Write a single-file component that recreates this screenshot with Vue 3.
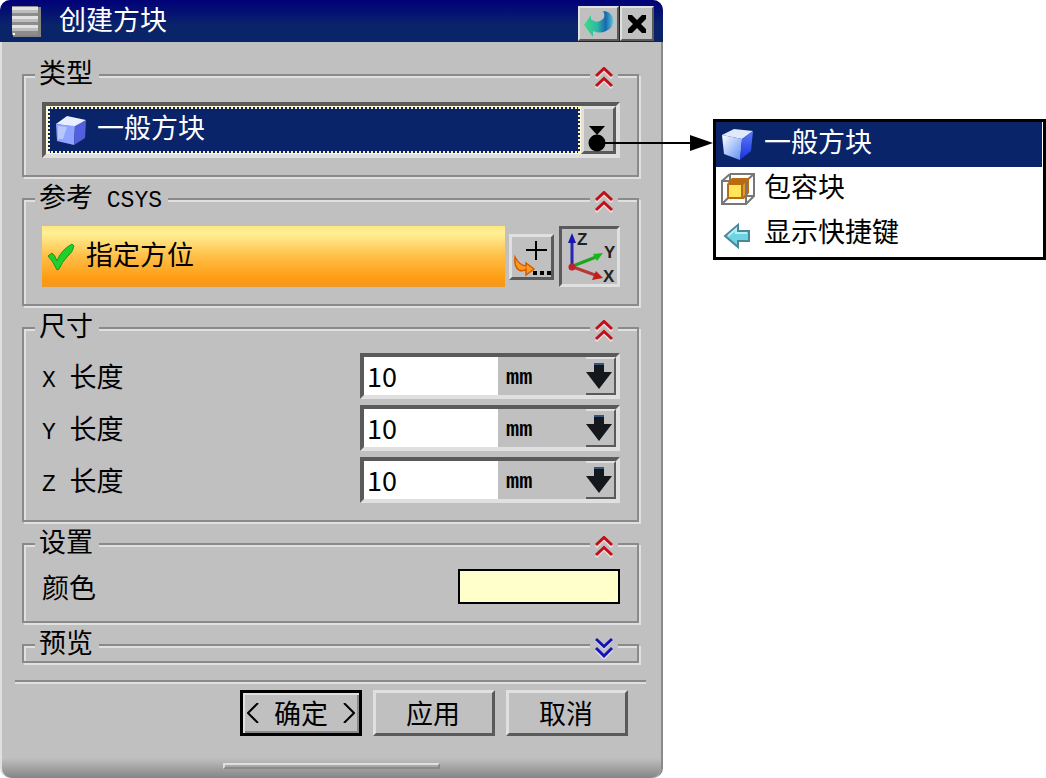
<script setup>
import { ref } from 'vue'

const kinds = ['一般方块', '包容块', '显示快捷键']
const kind = ref('一般方块')
const color = ref('#ffffcc')
const sizes = ref([
  { axis: 'X', value: '10' },
  { axis: 'Y', value: '10' },
  { axis: 'Z', value: '10' },
])
</script>

<template>
  <main class="stage">
    <section class="dialog" aria-labelledby="dialog-title">
      <header class="titlebar">
        <svg class="grip-icon" viewBox="0 0 30 32" aria-hidden="true">
          <rect x="1" y="1" width="28" height="30" fill="#85857f" />
          <rect x="0" y="0" width="26" height="29" fill="#8d8d8d" />
          <g fill="#e2e2e2">
            <rect x="0" y="1" width="26" height="6" />
            <rect x="0" y="10" width="26" height="6" />
            <rect x="0" y="19" width="26" height="6" />
          </g>
          <g fill="#bdbdbd">
            <rect x="0" y="4" width="26" height="3" />
            <rect x="0" y="13" width="26" height="3" />
            <rect x="0" y="22" width="26" height="3" />
          </g>
          <rect x="1" y="27" width="2" height="2" fill="#fff" />
        </svg>
        <h1 id="dialog-title">创建方块</h1>
        <button class="title-button reset" type="button" aria-label="重置">
          <svg width="34" height="30" viewBox="0 0 34 30" aria-hidden="true">
            <defs>
              <linearGradient id="reset-fill" x1="0" x2="1">
                <stop offset="0" stop-color="#3fdc86" />
                <stop offset=".45" stop-color="#2db8a6" />
                <stop offset=".75" stop-color="#1769ad" />
                <stop offset="1" stop-color="#5cc4dc" />
              </linearGradient>
            </defs>
            <path d="M2 16L9 6V10Q13 14 18 12Q25 9 21 2Q29 2 31 10Q32 19 24 22Q18 25 11 22V28Z" fill="url(#reset-fill)" />
          </svg>
        </button>
        <button class="title-button" type="button" aria-label="关闭">
          <svg width="22" height="22" viewBox="0 0 22 22" aria-hidden="true">
            <path d="M2 2H6L11 7L16 2H20V6L15 11L20 16V20H16L11 15L6 20H2V16L7 11L2 6Z" />
          </svg>
        </button>
      </header>

      <form class="groups" @submit.prevent>
        <section class="group">
          <div class="group-head">
            <h2><label for="kind">类型</label></h2>
            <button class="toggle" type="button" aria-label="折叠类型">
              <svg width="18" height="22" viewBox="0 0 18 22"><path class="halo" d="M1 11L9 3L17 11M1 21L9 13L17 21" /><path d="M1 9L9 1.500L17 9M1 19L9 11.500L17 19" /></svg>
            </button>
          </div>
          <div class="dropdown">
            <select id="kind" v-model="kind">
              <option v-for="k in kinds" :key="k">{{ k }}</option>
            </select>
            <svg class="dropdown-icon" width="32" height="32" viewBox="0 0 32 32" aria-hidden="true">
              <path d="M1 9L12 1L31 5L21 12Z" fill="#e8efff" />
              <path d="M1 9L20 11L19 30L2 26Z" fill="#8fa4ff" />
              <path d="M3 11L12 12L8 24L3 24Z" fill="#b9c7ff" />
              <path d="M20 11L31 5L30 23L19 30Z" fill="#5360dd" />
            </svg>
            <span class="dropdown-arrow" aria-hidden="true"></span>
            <svg class="connector" width="125" height="20" viewBox="0 0 125 20" aria-hidden="true">
              <circle cx="9" cy="10" r="8.500" />
              <rect x="9" y="9" width="95" height="2" />
              <path d="M102 2L125 10L102 18Z" />
            </svg>
          </div>
        </section>

        <section class="group">
          <div class="group-head">
            <h2>参考<span class="latin"> CSYS</span></h2>
            <button class="toggle" type="button" aria-label="折叠参考">
              <svg width="18" height="22" viewBox="0 0 18 22"><path class="halo" d="M1 11L9 3L17 11M1 21L9 13L17 21" /><path d="M1 9L9 1.500L17 9M1 19L9 11.500L17 19" /></svg>
            </button>
          </div>
          <div class="orient">
            <button class="specify" type="button">
              <svg width="28" height="28" viewBox="0 0 28 28" aria-hidden="true">
                <path d="M1 13L5 10Q8 12 10 18Q14 7 25 1L27 3Q26 9 20 14Q15 19 12 26L10 27Q6 18 1 13Z" fill="#1fd02d" stroke="#139a1e" stroke-width="1" />
              </svg>
              <span>指定方位</span>
            </button>
            <button class="point" type="button" aria-label="点对话框">
              <svg width="40" height="40" viewBox="0 0 40 40" aria-hidden="true">
                <path d="M14 13H35M24 4V23" stroke="#000" stroke-width="2" />
                <path d="M3 20Q2 30 7 33Q11 35 14 32V38L22 32L14 26V29Q8 29 3 20Z" fill="#ff9a1c" stroke="#d65a00" stroke-width="1.500" />
                <path d="M21 34H25V38H21ZM28 34H32V38H28ZM35 34H39V38H35Z" />
              </svg>
            </button>
            <button class="csys-button" type="button" aria-label="坐标系">
              <svg width="55" height="55" viewBox="0 0 55 55" aria-hidden="true">
                <path d="M10 38V11" stroke="#2525b8" stroke-width="3" />
                <path d="M10 4L14 14H6Z" fill="#1818b0" />
                <path d="M11 37L34 28" stroke="#1da51d" stroke-width="3" />
                <path d="M41 24L35 32L31 25Z" fill="#18b818" />
                <path d="M11 38L33 46" stroke="#b93636" stroke-width="3" />
                <path d="M41 49L30 51L34 42Z" fill="#c41b1b" />
                <circle cx="10" cy="38" r="3.500" fill="#c41f2d" />
                <g class="axis-names">
                  <text x="15" y="16">Z</text>
                  <text x="42" y="29">Y</text>
                  <text x="41" y="53">X</text>
                </g>
              </svg>
            </button>
          </div>
        </section>

        <section class="group sizes-group">
          <div class="group-head">
            <h2>尺寸</h2>
            <button class="toggle" type="button" aria-label="折叠尺寸">
              <svg width="18" height="22" viewBox="0 0 18 22"><path class="halo" d="M1 11L9 3L17 11M1 21L9 13L17 21" /><path d="M1 9L9 1.500L17 9M1 19L9 11.500L17 19" /></svg>
            </button>
          </div>
          <div class="sizes">
            <div v-for="s in sizes" :key="s.axis" class="size-row">
              <label :for="'size-' + s.axis"><span class="latin axis">{{ s.axis + ' ' }}</span>长度</label>
              <div class="measure">
                <input :id="'size-' + s.axis" v-model="s.value" type="text" />
                <span class="unit">mm</span>
                <button type="button" :aria-label="s.axis + ' 长度选项'">
                  <svg width="26" height="28" viewBox="0 0 26 28" aria-hidden="true">
                    <path d="M8 1H18V10H26L13 27L0 10H8Z" fill="#14171c" />
                    <path d="M8 1H18V3H8Z" fill="#36557f" />
                  </svg>
                </button>
              </div>
            </div>
          </div>
        </section>

        <section class="group">
          <div class="group-head">
            <h2>设置</h2>
            <button class="toggle" type="button" aria-label="折叠设置">
              <svg width="18" height="22" viewBox="0 0 18 22"><path class="halo" d="M1 11L9 3L17 11M1 21L9 13L17 21" /><path d="M1 9L9 1.500L17 9M1 19L9 11.500L17 19" /></svg>
            </button>
          </div>
          <div class="color-row">
            <label for="color">颜色</label>
            <input id="color" v-model="color" type="color" />
          </div>
        </section>

        <section class="group preview">
          <div class="group-head">
            <h2>预览</h2>
            <button class="toggle closed" type="button" aria-label="展开预览">
              <svg width="18" height="22" viewBox="0 0 18 22"><path class="halo" d="M1 3L9 11L17 3M1 13L9 21L17 13" /><path d="M1 2L9 9.500L17 2M1 11L9 19L17 11" /></svg>
            </button>
          </div>
        </section>
      </form>

      <footer>
        <div class="actions">
          <button class="action primary" type="button">
            <svg width="12" height="20" viewBox="0 0 12 20" aria-hidden="true"><path d="M11 0L1 10L11 20" /></svg>
            <span>确定</span>
            <svg width="12" height="20" viewBox="0 0 12 20" aria-hidden="true"><path d="M1 0L11 10L1 20" /></svg>
          </button>
          <button class="action" type="button">应用</button>
          <button class="action" type="button">取消</button>
        </div>
        <div class="resize-strip"><span></span></div>
      </footer>
    </section>

    <ul class="menu">
      <li>
        <button class="item selected" type="button">
          <svg width="34" height="32" viewBox="0 0 34 32" aria-hidden="true">
            <defs>
              <linearGradient id="cube-left" x1="0" x2="1" y1="0" y2="1">
                <stop offset="0" stop-color="#fff" />
                <stop offset="1" stop-color="#5a8bf5" />
              </linearGradient>
              <linearGradient id="cube-right" x1="0" x2="0" y1="0" y2="1">
                <stop offset="0" stop-color="#5d7df8" />
                <stop offset="1" stop-color="#1a2fe0" />
              </linearGradient>
            </defs>
            <path d="M1 7L13 1L32 3L21 11Z" fill="#dfeaff" />
            <path d="M1 7L21 11L19 32L3 26Z" fill="url(#cube-left)" />
            <path d="M21 11L32 3L30 23L19 32Z" fill="url(#cube-right)" />
          </svg>
          <span>一般方块</span>
        </button>
      </li>
      <li>
        <button class="item" type="button">
          <svg width="34" height="32" viewBox="0 0 34 32" aria-hidden="true">
            <g fill="none" stroke="#777" stroke-width="2">
              <path d="M1 8H25V31H1ZM9 1H33V23L25 31M1 8L9 1M25 8L33 1M9 1V23H33M1 31L9 23" />
            </g>
            <path d="M6 11L11 5H28V20L23 26H6Z" fill="#b96b12" />
            <path d="M8 12H20V24H8Z" fill="#ffe45c" />
            <path d="M22 12L26 8V19L22 24Z" fill="#e79a25" />
            <path d="M25 8V31" stroke="#777" stroke-width="2" />
          </svg>
          <span>包容块</span>
        </button>
      </li>
      <li>
        <button class="item" type="button">
          <svg width="34" height="32" viewBox="0 0 34 32" aria-hidden="true">
            <path d="M4 18L17 7V13H28V23H17V29Z" fill="#6fd3e3" stroke="#4a8798" stroke-width="2" />
            <path d="M7 18L15 11V15H26" fill="none" stroke="#b5eef5" stroke-width="2" />
          </svg>
          <span>显示快捷键</span>
        </button>
      </li>
    </ul>
  </main>
</template>

<style>
body {
  background: #fff;
}
</style>

<style scoped>
.stage {
  --face: #c0c0c0;
  --light: #e0e0e0;
  --shade: #8a8a8a;
  --dark: #5a5a5a;
  --navy: #0a246a;
  display: grid;
  grid-template-columns: minmax(0, 663fr) minmax(0, 333fr);
  column-gap: 50px;
  min-height: 100vh;
  color: #000;
  font: 27px/32px "Noto Sans CJK SC", sans-serif;
}

.stage * {
  box-sizing: border-box;
}

button,
input,
select {
  margin: 0;
  padding: 0;
  border: 0;
  border-radius: 0;
  background: var(--face);
  color: inherit;
  font: inherit;
}

svg {
  display: block;
  flex: none;
}

h1,
h2 {
  margin: 0;
  font: inherit;
}

.latin {
  font-family: "Liberation Mono", monospace;
  font-size: 23px;
  line-height: 1;
  white-space: pre;
}

.dialog {
  display: flex;
  flex-direction: column;
  border-right: 2px solid var(--shade);
  border-left: 2px solid var(--light);
  border-radius: 10px;
  background: var(--face);
}

.titlebar {
  display: flex;
  align-items: flex-start;
  height: 42px;
  margin: 0 -2px;
  padding: 6px 9px 0 12px;
  border-radius: 10px 10px 0 0;
  background: linear-gradient(#000078, var(--navy) 60%);
  color: #fff;
}

.grip-icon {
  width: 30px;
  height: 32px;
}

.titlebar h1 {
  flex: 1;
  margin-left: 17px;
  line-height: 26px;
}

.title-button {
  display: grid;
  place-items: center;
  width: 34px;
  height: 35px;
  border: 2px solid;
  border-color: var(--light) var(--dark) var(--dark) var(--light);
}

.title-button.reset {
  width: 41px;
  margin-right: 1px;
}

.groups {
  display: flex;
  flex-direction: column;
  gap: 21px;
  padding: 32px 22px 0 20px;
}

.group {
  padding: 0 17px 17px 18px;
  border: 2px solid var(--shade);
  box-shadow: 2px 2px 0 var(--light), inset 2px 2px 0 var(--light);
}

.group-head {
  display: flex;
  align-items: flex-start;
  justify-content: space-between;
  height: 33px;
  margin: -18px 2px 11px -7px;
}

.group-head h2 {
  height: 28px;
  padding: 0 6px 0 4px;
  background: var(--face);
  line-height: 28px;
}

.toggle {
  display: grid;
  place-items: center;
  width: 28px;
  height: 26px;
  margin-top: 7px;
}

.toggle path {
  fill: none;
  stroke: #c00f18;
  stroke-width: 3;
}

.toggle .halo {
  stroke: #f6dcdc;
}

.toggle.closed path {
  stroke: #1414b4;
}

.toggle.closed .halo {
  stroke: #dcdcf6;
}

.dropdown {
  position: relative;
  display: flex;
  height: 56px;
  border: 4px solid;
  border-color: var(--dark) var(--light) var(--light) var(--dark);
  background: #fff8d8;
}

.dropdown select {
  flex: 1;
  min-width: 0;
  margin: 1px 1px 1px 2px;
  padding: 0 0 6px 47px;
  border: 2px dotted #fff3b8;
  outline: 0;
  background: var(--navy);
  color: #fff;
  appearance: none;
}

.dropdown select option {
  background: #fff;
  color: #000;
}

.dropdown-icon {
  position: absolute;
  top: 9px;
  left: 9px;
  pointer-events: none;
}

.dropdown-arrow {
  display: flex;
  justify-content: center;
  width: 35px;
  padding: 17px 3px 0 0;
  border: 3px solid;
  border-color: var(--light) var(--dark) var(--dark) var(--light);
  background: var(--face);
  pointer-events: none;
}

.dropdown-arrow::before {
  height: 9px;
  border: 8px solid transparent;
  border-top: 9px solid #000;
  border-bottom: 0;
  content: "";
}

.connector {
  position: absolute;
  top: 27px;
  right: -97px;
  z-index: 1;
  pointer-events: none;
}

.orient {
  display: flex;
  align-items: center;
  height: 61px;
}

.specify {
  display: flex;
  flex: 1;
  align-items: center;
  gap: 11px;
  height: 100%;
  padding-left: 5px;
  background: linear-gradient(#ffe77f, #fff096 12%, #ffbe46 50%, #fd9a10 88%, #ee9a28);
}

.specify span,
.item span {
  padding-bottom: 5px;
}

.point {
  display: grid;
  place-items: center;
  width: 45px;
  height: 46px;
  margin: 0 5px 0 4px;
  border: 3px solid;
  border-color: var(--light) var(--dark) var(--dark) var(--light);
}

.csys-button {
  width: 61px;
  height: 61px;
  border: 3px solid;
  border-color: var(--dark) var(--light) var(--light) var(--dark);
}

.axis-names {
  fill: #222;
  font: bold 17px "Liberation Sans", sans-serif;
}

.sizes-group .group-head {
  margin-bottom: 9px;
}

.sizes {
  display: grid;
  gap: 6px;
}

.size-row {
  display: flex;
  align-items: center;
  justify-content: space-between;
  height: 46px;
}

.measure {
  display: flex;
  width: 45%;
  height: 46px;
  border: 4px solid;
  border-color: var(--dark) var(--light) var(--light) var(--dark);
}

.measure input {
  flex: 1;
  min-width: 0;
  padding-left: 3px;
  outline: 0;
  background: #fff;
}

.unit {
  width: 88px;
  padding-left: 8px;
  font: bold 22px/44px "Liberation Mono", monospace;
}

.measure button {
  display: grid;
  align-items: center;
  justify-items: start;
  width: 30px;
  border: 2px solid;
  border-left: 0;
  border-color: var(--light) var(--dark) var(--dark) var(--light);
}

.color-row {
  display: flex;
  align-items: center;
  justify-content: space-between;
  height: 35px;
  margin-top: -2px;
}

.color-row input {
  width: 28%;
  height: 35px;
  border: 2px solid #000;
  appearance: none;
}

.color-row input::-webkit-color-swatch-wrapper {
  padding: 0;
}

.color-row input::-webkit-color-swatch {
  border: 0;
  border-radius: 0;
}

.preview {
  padding-bottom: 0;
}

.preview .group-head {
  margin-bottom: 0;
}

footer {
  display: flex;
  flex: 1;
  flex-direction: column;
  margin-top: 17px;
}

.actions {
  display: flex;
  gap: 11px;
  justify-content: flex-end;
  margin: 0 15px 0 13px;
  padding: 8px 18px 0 0;
  border-top: 2px solid var(--shade);
  box-shadow: inset 0 2px 0 var(--light);
}

.action {
  display: flex;
  align-items: center;
  justify-content: center;
  width: 122px;
  height: 46px;
  padding-right: 2px;
  border: 3px solid;
  border-color: var(--light) var(--dark) var(--dark) var(--light);
}

.action.primary {
  justify-content: space-between;
  padding: 0 4px;
  border-color: #000;
  box-shadow: inset 2px 2px 0 var(--light), inset -2px -2px 0 var(--shade);
}

.action path {
  fill: none;
  stroke: #000;
  stroke-width: 2;
}

.resize-strip {
  display: flex;
  flex: 1;
  align-items: flex-end;
  justify-content: center;
  min-height: 38px;
  padding-bottom: 9px;
  border-radius: 0 0 10px 10px;
  background: linear-gradient(to top, #858585, var(--face) 20px);
}

.resize-strip span {
  width: 33%;
  height: 6px;
  border: 2px solid;
  border-color: var(--light) var(--shade) var(--shade) var(--light);
}

.menu {
  align-self: start;
  margin: 119px 0 0;
  padding: 0 1px 0 0;
  border: 3px solid #000;
  background: #fff;
  list-style: none;
}

.item {
  display: flex;
  align-items: center;
  gap: 9px;
  width: 100%;
  height: 45px;
  padding: 0 0 2px 5px;
  background: #fff;
}

.item.selected {
  background: var(--navy);
  color: #fff;
}
</style>
